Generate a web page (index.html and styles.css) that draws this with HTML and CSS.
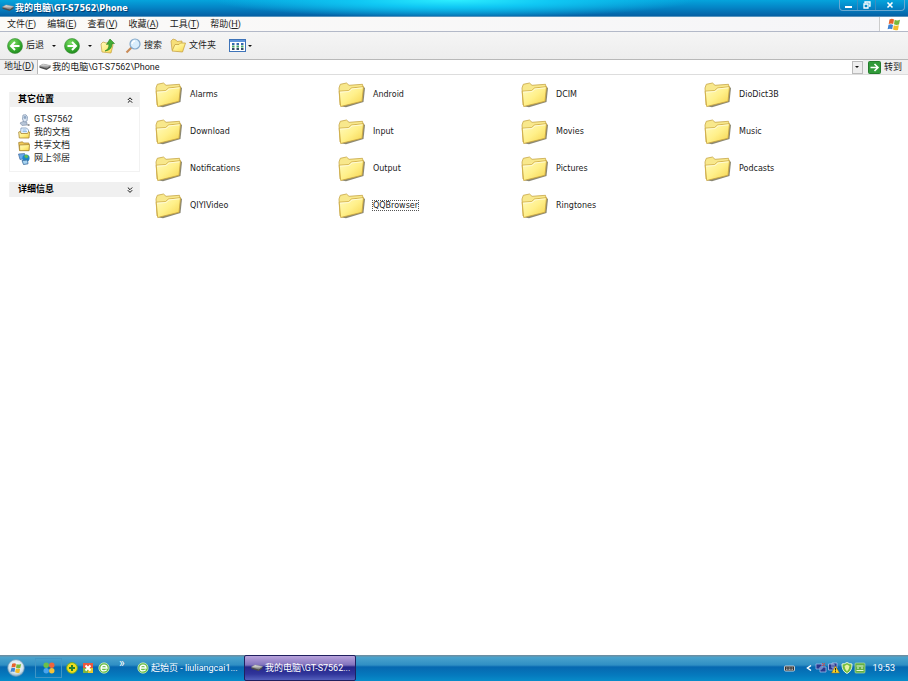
FILE: index.html
```html
<!DOCTYPE html>
<html lang="zh-CN">
<head>
<meta charset="utf-8">
<title>我的电脑\GT-S7562\Phone</title>
<link rel="stylesheet" href="styles.css">
</head>
<body>
<svg class="defs" aria-hidden="true">
  <defs>
    <linearGradient id="gold" x1="0" y1="0" x2="1" y2="1"><stop offset="0" stop-color="#fffbc0"/><stop offset=".5" stop-color="#fff08a"/><stop offset="1" stop-color="#f5d24a"/></linearGradient>
    <radialGradient id="green" cx=".4" cy=".3" r=".8"><stop offset="0" stop-color="#7bdc62"/><stop offset=".6" stop-color="#35a92d"/><stop offset="1" stop-color="#187d18"/></radialGradient>
    <linearGradient id="steel" x1="0" y1="0" x2="0" y2="1"><stop offset="0" stop-color="#f4f4f4"/><stop offset="1" stop-color="#777"/></linearGradient>
    <radialGradient id="orb" cx=".5" cy=".4" r=".6"><stop offset="0" stop-color="#fff"/><stop offset=".7" stop-color="#d3e4ee"/><stop offset="1" stop-color="#7fa9c4"/></radialGradient>
  </defs>
  <symbol id="folder" viewBox="0 0 27 26">
    <path d="M3 24.300 8 25.300 25.500 20 27 6 24.500 4z" fill="#77735c" opacity=".85"/>
    <path d="M1 6 2.300 2.300 8.500 1 11 3.300 24.500 2.300 25 5 23 18 2 23z" fill="#f8e88c" stroke="#c7a648" stroke-width=".8"/>
    <path d="M1.200 9.200 10.500 8.600 13.500 6 25.500 4.700 24 19.300 2.700 24.500z" fill="url(#gold)" stroke="#caa53c" stroke-width=".8"/>
    <path d="M2 10.200 11 9.500 14 6.900 24.500 5.800" fill="none" stroke="#fffde6" stroke-width=".8"/>
  </symbol>
  <symbol id="drive" viewBox="0 0 12 8">
    <path d="M.5 3 4 1 11.500 2.500 11.500 4.500 7.500 7 .5 4.800z" fill="#4c4c4c"/>
    <path d="M.5 3 4 1 11.500 2.500 7.800 5z" fill="url(#steel)" stroke="#aaa" stroke-width=".5"/>
  </symbol>
  <symbol id="winflag" viewBox="0 0 14 13">
    <path d="M2.500 1.500Q5 .2 7 1.500L6.200 6Q4 4.800 1.700 6z" fill="#e8632c"/>
    <path d="M7.700 1.800Q10 3 13 1.800L12 6.500Q9.500 7.500 7 6.300z" fill="#79b83a"/>
    <path d="M1.500 6.800Q4 5.600 6 6.900L5.200 11.300Q3 10 .6 11.300z" fill="#3f83d2"/>
    <path d="M6.800 7.200Q9 8.300 11.800 7.300L11 11.900Q8.500 12.800 6 11.600z" fill="#f4bc2a"/>
  </symbol>
  <symbol id="browser-e" viewBox="0 0 12 12">
    <circle cx="6" cy="6" r="5.200" fill="#69bd45" stroke="#dff5c8" stroke-width=".7"/>
    <path d="M3 6H9Q8.700 3.200 6 3.200T3.100 6.100 6 8.900Q7.800 8.900 8.700 7.700" fill="none" stroke="#fff" stroke-width="1.400"/>
  </symbol>
</svg>

<header class="titlebar">
  <svg class="drive"><use href="#drive"/></svg>
  <h1>我的电脑\GT-S7562\Phone</h1>
  <div class="controls">
    <button aria-label="最小化"><svg viewBox="0 0 10 8"><path d="M1 6H8" stroke="#fff" stroke-width="2"/></svg></button>
    <button aria-label="还原"><svg viewBox="0 0 10 8"><path d="M3 2V1H8V5H7M2 3H6V7H2z" fill="none" stroke="#fff" stroke-width="1.300"/></svg></button>
    <button class="close" aria-label="关闭"><svg viewBox="0 0 10 8"><path d="M2.500 1.500 7.500 6.500M7.500 1.500 2.500 6.500" stroke="#fff" stroke-width="1.600"/></svg></button>
  </div>
</header>

<nav class="menubar">
  <button>文件(<u>F</u>)</button>
  <button>编辑(<u>E</u>)</button>
  <button>查看(<u>V</u>)</button>
  <button>收藏(<u>A</u>)</button>
  <button>工具(<u>T</u>)</button>
  <button>帮助(<u>H</u>)</button>
  <span class="brand"><svg><use href="#winflag"/></svg></span>
</nav>

<div class="toolbar">
  <button class="back"><svg class="round" viewBox="0 0 16 16"><circle cx="8" cy="8" r="7.500" fill="url(#green)" stroke="#3f8f3b" stroke-width=".6"/><path d="M12.500 8H4.500M8 4 4 8 8 12" fill="none" stroke="#fff" stroke-width="2"/></svg>后退</button>
  <button class="drop" aria-label="后退记录"><i class="caret"></i></button>
  <button class="forward" aria-label="前进"><svg class="round" viewBox="0 0 16 16"><circle cx="8" cy="8" r="7.500" fill="url(#green)" stroke="#3f8f3b" stroke-width=".6"/><path d="M3.500 8H11.500M8 4 12 8 8 12" fill="none" stroke="#fff" stroke-width="2"/></svg></button>
  <button class="drop" aria-label="前进记录"><i class="caret"></i></button>
  <button class="up" aria-label="向上"><svg class="tool" viewBox="0 0 16 16"><path d="M1 6 3 4 6 5 12 4.500 13 7 11 15 2 14z" fill="url(#gold)" stroke="#c7a142" stroke-width=".7"/><path d="M5 13Q9.500 11 8.800 6L6.500 6.500 10 1 14.500 5.500 12 5.700Q12 12 5 13z" fill="#42ad35" stroke="#237d20" stroke-width=".6"/></svg></button>
  <button class="search"><svg class="tool" viewBox="0 0 16 16"><path d="M6.500 9.500 1.500 14.500" stroke="#c98b58" stroke-width="2.200"/><circle cx="10" cy="6" r="5" fill="#d8edfc" stroke="#84a9cb" stroke-width="1.200"/><path d="M7 6Q7.500 3 10 3" stroke="#fff" stroke-width="1.300" fill="none"/></svg>搜索</button>
  <button class="folders"><svg class="tool" viewBox="0 0 16 16"><path d="M1 3 3 1 6 2 7 3.500 12 3 12 12 2 12z" fill="#f6df78" stroke="#c7a142" stroke-width=".7"/><path d="M2 13 5 6.500 9 6.500 10.500 5 15.500 5 12.500 14z" fill="url(#gold)" stroke="#c7a142" stroke-width=".8"/></svg>文件夹</button>
  <button class="views" aria-label="查看方式"><svg viewBox="0 0 17 13"><rect x=".5" y=".5" width="16" height="12" fill="#fff" stroke="#3e73b8"/><path d="M1 2H16" stroke="#5f96dd" stroke-width="2"/><path d="M3 5H5.500M7.500 5H10M12 5H14.500" stroke="#3568af" stroke-width="2"/><path d="M3 7.500H5.500M7.500 7.500H10M12 7.500H14.500" stroke="#4aa56e" stroke-width="2"/><path d="M3 10H5.500M7.500 10H10M12 10H14.500" stroke="#334c66" stroke-width="2"/></svg><i class="caret"></i></button>
</div>

<form class="address">
  <label for="path">地址(<u>D</u>)</label>
  <div class="field">
    <svg class="drive"><use href="#drive"/></svg>
    <input id="path" type="text" value="我的电脑\GT-S7562\Phone">
    <button type="button" class="open" aria-label="展开"><i class="caret"></i></button>
  </div>
  <button type="button" class="go"><svg viewBox="0 0 13 13"><rect x=".5" y=".5" width="12" height="12" rx="1" fill="#319b3a" stroke="#247c2c"/><path d="M2.500 6.500H10M6.500 3 10 6.500 6.500 10" fill="none" stroke="#fff" stroke-width="1.600"/></svg>转到</button>
</form>

<main class="content">
  <aside class="side">
    <section class="panel">
      <h2>其它位置<svg class="chev" viewBox="0 0 6 6"><path d="M.8 3 3 .8 5.200 3M.8 5.700 3 3.500 5.200 5.700" fill="none" stroke="#111"/></svg></h2>
      <ul>
        <li><a href="#"><svg viewBox="0 0 12 12"><path d="M5 1 8 .8 9.500 3 9 7 6 8.500 4.500 5z" fill="#dce6f2" stroke="#8398b4" stroke-width=".8"/><circle cx="7" cy="3.500" r="1.400" fill="#8da5c2"/><path d="M2 9 5 7.500 9 8.500 9 11 4 11.500z" fill="#b8c6d8" stroke="#7a8ca4" stroke-width=".6"/><path d="M9.500 11H11.500" stroke="#333"/></svg><span>GT-S7562</span></a></li>
        <li><a href="#"><svg viewBox="0 0 12 12"><path d="M3 1H8.500L10.500 3V8H2.500z" fill="#f4f9ff" stroke="#7193b9" stroke-width=".8"/><path d="M4.500 3H8.500M4.500 4.700H9" stroke="#67a1d9" stroke-width=".8"/><path d="M.7 5 2.300 4.500 3 6.500H9.700L10.500 4.500 11.500 5 11 11H1.300z" fill="url(#gold)" stroke="#a98732" stroke-width=".8"/></svg>我的文档</a></li>
        <li><a href="#"><svg viewBox="0 0 12 12"><path d="M.7 2.500 4.500 1.800 5.500 3H10.800V10.500H1.500z" fill="#f0c957" stroke="#a98732" stroke-width=".8"/><path d="M1.500 5 11.500 4.500 11 10.700H1.700z" fill="url(#gold)" stroke="#a98732" stroke-width=".8"/></svg>共享文档</a></li>
        <li><a href="#"><svg viewBox="0 0 12 12"><path d="M.5 1 6.500.5 7.500 5.500 2 6.500z" fill="#6aa8e8" stroke="#456c9b" stroke-width=".7"/><circle cx="8" cy="5" r="3.600" fill="#1c86cb"/><path d="M6 3Q9 0 10.500 4L8 5.500z" fill="#60bb52"/><path d="M4 7.500 9.500 7 10 10.800 5.500 11.500z" fill="#a8d5f2" stroke="#37699c" stroke-width=".8"/></svg>网上邻居</a></li>
      </ul>
    </section>
    <section class="panel closed">
      <h2>详细信息<svg class="chev" viewBox="0 0 6 6"><path d="M.8.5 3 2.700 5.200.5M.8 3.200 3 5.400 5.200 3.200" fill="none" stroke="#111"/></svg></h2>
    </section>
  </aside>
  <ul class="files">
    <li><svg><use href="#folder"/></svg><span>Alarms</span></li>
    <li><svg><use href="#folder"/></svg><span>Android</span></li>
    <li><svg><use href="#folder"/></svg><span>DCIM</span></li>
    <li><svg><use href="#folder"/></svg><span>DioDict3B</span></li>
    <li><svg><use href="#folder"/></svg><span>Download</span></li>
    <li><svg><use href="#folder"/></svg><span>Input</span></li>
    <li><svg><use href="#folder"/></svg><span>Movies</span></li>
    <li><svg><use href="#folder"/></svg><span>Music</span></li>
    <li><svg><use href="#folder"/></svg><span>Notifications</span></li>
    <li><svg><use href="#folder"/></svg><span>Output</span></li>
    <li><svg><use href="#folder"/></svg><span>Pictures</span></li>
    <li><svg><use href="#folder"/></svg><span>Podcasts</span></li>
    <li><svg><use href="#folder"/></svg><span>QIYIVideo</span></li>
    <li><svg><use href="#folder"/></svg><span class="focused">QQBrowser</span></li>
    <li><svg><use href="#folder"/></svg><span>Ringtones</span></li>
  </ul>
</main>

<footer class="taskbar">
  <button class="start" aria-label="开始"><svg viewBox="0 0 18 18"><circle cx="9" cy="9" r="8.400" fill="url(#orb)" stroke="#5b8fb2" stroke-width=".7"/><use href="#winflag" x="3" y="3" width="12" height="12"/></svg></button>
  <div class="quick">
    <button class="first" aria-label="应用"><svg viewBox="0 0 12 12"><circle cx="3.200" cy="3.200" r="2.700" fill="#6cc04a"/><circle cx="8.800" cy="3.200" r="2.700" fill="#f0643c"/><circle cx="3.200" cy="8.800" r="2.700" fill="#49a4ee"/><circle cx="8.800" cy="8.800" r="2.700" fill="#f5c236"/></svg></button>
    <button aria-label="安全卫士"><svg viewBox="0 0 12 12"><circle cx="6" cy="6" r="5.400" fill="#f2dc1c" stroke="#68a92e"/><path d="M6 3V9M3 6H9" stroke="#27822c" stroke-width="2"/></svg></button>
    <button aria-label="图片"><svg viewBox="0 0 12 12"><path d="M1 1H11V11H1z" fill="#e9573f"/><path d="M1 6H6V11H1z" fill="#7eb640"/><path d="M6 6H11V11H6z" fill="#eac92e"/><path d="M3.500 3.500 8.500 8.500M8.500 3.500 3.500 8.500" stroke="#fff" stroke-width="2"/></svg></button>
    <button aria-label="浏览器"><svg><use href="#browser-e"/></svg></button>
    <button class="more" aria-label="更多">»</button>
  </div>
  <button class="task"><svg><use href="#browser-e"/></svg>起始页 - liuliangcai1...</button>
  <button class="task active"><svg class="drive"><use href="#drive"/></svg>我的电脑\GT-S7562...</button>
  <div class="tray">
    <svg class="keyboard" viewBox="0 0 11 7"><rect x=".5" y="1" width="10" height="5" rx="1" fill="#333" stroke="#eee" stroke-width=".8"/><path d="M2 3H9M2 4.500H9" stroke="#ddd" stroke-width=".7" stroke-dasharray="1 .5"/></svg>
    <button aria-label="显示图标"><svg viewBox="0 0 6 8"><path d="M5 1.500 1.500 4 5 6.500" fill="none" stroke="#fff" stroke-width="1.500"/></svg></button>
    <svg viewBox="0 0 12 12"><path d="M1 2H7V7H1zM5 5H11V10H5z" fill="#28378d" stroke="#9cb7e7" stroke-width=".8"/><path d="M7 1 10 4M10 1 7 4" stroke="#e04545"/></svg>
    <svg viewBox="0 0 12 12"><path d="M.5 2H6V8H.5zM4 1H9V6H4z" fill="#28378d" stroke="#b0c4ed" stroke-width=".8"/><path d="M7.500 4 11.500 11H3.500z" fill="#f9d327" stroke="#936b1b" stroke-width=".5"/><path d="M7.500 6V8.500M7.500 9.200V10.200" stroke="#222"/></svg>
    <svg viewBox="0 0 12 12"><path d="M6 .5Q8.500 2 11 2 11.300 9 6 11.500.7 9 1 2 3.500 2 6 .5z" fill="#72bd3b" stroke="#f2ffe5" stroke-width=".9"/><path d="M6 2.500 8.500 4Q8 8 6 9.500 4 8 3.500 4z" fill="#e7f2a4"/></svg>
    <svg viewBox="0 0 12 12"><rect x="1" y="1" width="10" height="10" rx="1" fill="#63b044" stroke="#b2dda1" stroke-width=".7"/><path d="M2.500 4H9.500M2.500 8.500H9.500M3 6H5M7 6H9" stroke="#e7f8dc"/></svg>
    <time>19:53</time>
  </div>
</footer>
</body>
</html>
```

FILE: styles.css
```css
* { box-sizing: border-box; }

body {
  margin: 0;
  min-height: 100vh;
  display: flex;
  flex-direction: column;
  background: #fff;
  color: #222;
  font: 9px/13px Roboto, "Noto Sans CJK SC", sans-serif;
}

button, input {
  font: inherit;
  color: inherit;
  border: 0;
  padding: 0;
  margin: 0;
  background: none;
}

button { display: flex; align-items: center; white-space: nowrap; }
svg { display: block; flex: none; width: 12px; height: 12px; }
h1, h2, ul { margin: 0; padding: 0; font-size: inherit; }
ul { list-style: none; }
u { text-underline-offset: 1px; }
.defs { position: absolute; width: 0; height: 0; }
.drive { width: 12px; height: 8px; }

.caret {
  border: 2px solid transparent;
  border-top-color: #111;
  border-bottom: 0;
}

.titlebar {
  height: 17px;
  display: flex;
  align-items: center;
  gap: 1px;
  padding-left: 2px;
  color: #fff;
  background:
    radial-gradient(ellipse 240px 18px at 50% 0, #2deeff, #10c8f4 40%, transparent),
    linear-gradient(#05a4dc, #0486c7 45%, #0560a4);
  border-bottom: 1px solid #5794bd;
}

.titlebar h1 {
  flex: 1;
  font-family: "DejaVu Sans Condensed", "Noto Sans CJK SC", sans-serif;
  font-weight: 700;
  text-shadow: 1px 1px 1px #003568;
}

.controls {
  align-self: flex-start;
  display: flex;
  height: 11px;
  margin-right: 3px;
  border: 1px solid #68a9d2;
  border-top: 0;
  border-radius: 0 0 4px 4px;
}

.controls button { width: 18px; justify-content: center; border-right: 1px solid #3d8dbf; }
.controls .close { width: 28px; border-right: 0; }
.controls svg { width: 10px; height: 8px; }

.menubar {
  height: 15px;
  display: flex;
  gap: 11px;
  padding-left: 7px;
  background: linear-gradient(90deg, #fbfaf8, #f5f5f8);
  border-bottom: 1px solid #b3b9c8;
}

.brand {
  width: 29px;
  margin-left: auto;
  display: flex;
  align-items: center;
  justify-content: center;
  background: #fff;
  border-left: 1px solid #ccc;
}

.brand svg { width: 14px; height: 13px; }

.toolbar {
  height: 28px;
  display: flex;
  align-items: center;
  padding-left: 7px;
  background: linear-gradient(#f5f5f5, #ededed);
  border-bottom: 1px solid #b8b8b8;
}

.toolbar button { gap: 3px; }
.toolbar .round { width: 16px; height: 16px; }
.toolbar .tool { width: 16px; height: 16px; }
.toolbar .drop { width: 20px; justify-content: center; }
.toolbar .up { margin-right: 9px; }
.toolbar .search { margin-right: 8px; }
.toolbar .folders { margin-right: 13px; }
.toolbar .views { gap: 2px; }
.views svg { width: 17px; height: 13px; }

.address {
  height: 15px;
  display: flex;
  align-items: stretch;
  padding: 0 6px 0 4px;
  background: #f0f0f0;
  border-bottom: 1px solid #ddd;
}

.address label { margin-right: 3px; }

.field {
  flex: 1;
  display: flex;
  align-items: center;
  gap: 1px;
  padding-left: 1px;
  background: #fff;
  border-left: 1px solid #b8b8b8;
}

.field input { flex: 1; min-width: 0; height: 13px; outline: 0; }

.open {
  width: 11px;
  height: 13px;
  justify-content: center;
  background: #eee;
  border: 1px solid #bbb;
}

.go { gap: 3px; margin-left: 5px; }
.go svg { width: 13px; height: 13px; }

.content { flex: 1; display: flex; align-items: flex-start; gap: 15px; padding-right: 21px; }
.side { width: 140px; padding: 17px 0 0 9px; }
.panel { margin-bottom: 10px; border: 1px solid #f2f2f2; border-top: 0; }
.panel.closed { border-bottom: 0; }

.panel h2 {
  height: 15px;
  display: flex;
  align-items: center;
  justify-content: space-between;
  padding: 0 6px 0 8px;
  color: #000;
  background: #f0f0f0;
}

.chev { width: 6px; height: 6px; }
.panel ul { padding: 6px 8px 6px; }
.panel a { display: flex; align-items: center; gap: 4px; color: inherit; text-decoration: none; }

.files {
  flex: 1;
  display: grid;
  grid-template-columns: repeat(4, 1fr);
  grid-auto-rows: 37px;
  padding-top: 1px;
  font-family: "DejaVu Sans", sans-serif;
  font-size: 8px;
}

.files li { display: flex; align-items: center; gap: 8px; }
.files svg { width: 27px; height: 26px; }
.files .focused { line-height: 9px; outline: 1px dotted #555; }

.taskbar {
  height: 26px;
  display: flex;
  align-items: stretch;
  color: #fff;
  background: linear-gradient(#6b8fa3 0 1px, #4ba3cd 2px, #2f8fc4 10px, #0668b0 12px, #0579bd 20px, #078cc9);
}

.start { width: 35px; padding-left: 7px; }
.start svg { width: 18px; height: 18px; }
.quick { display: flex; align-items: center; gap: 4px; width: 102px; }
.quick .first { width: 27px; height: 20px; justify-content: center; border: 1px solid #3f95c5; }
.quick .more { align-self: flex-start; margin: 2px 0 0 5px; font-size: 12px; }
.task { width: 107px; gap: 2px; }
.task.active {
  width: 112px;
  padding-left: 6px;
  border: 1px solid #20205f;
  border-radius: 2px;
  background: linear-gradient(#b9a3dc, #8173bd 9px, #26268a 11px, #30359b 18px, #5460bd);
}

.tray { margin-left: auto; display: flex; align-items: center; gap: 1px; padding-right: 13px; }
.tray .keyboard { width: 11px; height: 7px; margin-right: 10px; }
.tray button svg { width: 6px; height: 8px; margin-right: 2px; }
.tray time { margin-left: 6px; }
```
